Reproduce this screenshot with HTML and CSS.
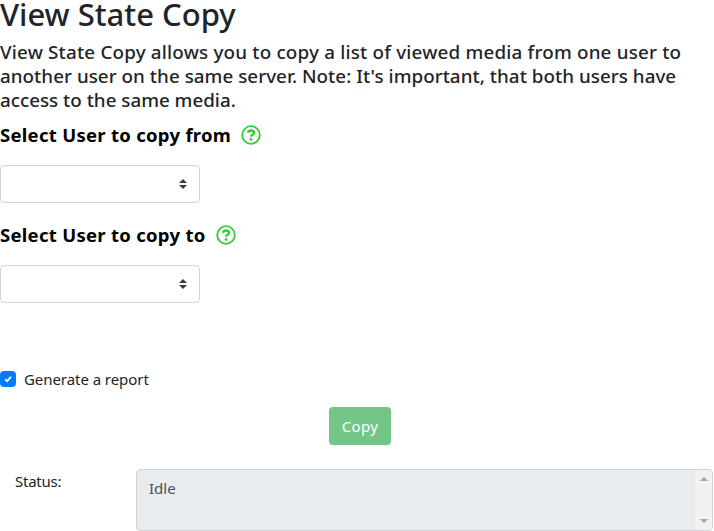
FILE: index.html
```html
<!DOCTYPE html>
<html lang="en">
<head>
<meta charset="utf-8">
<title>View State Copy</title>
<link rel="stylesheet" href="styles.css">
</head>
<body>
<main>
  <h1><span>View State Copy</span></h1>
  <p class="intro"><span class="l1">View State Copy allows you to copy a list of viewed media from one user to</span><br><span class="l2">another user on the same server. Note: It's important, that both users have</span><br><span class="l3">access to the same media.</span></p>
  <section class="field">
    <div class="label"><span>Select User to copy from</span>
      <svg class="help" viewBox="0 0 20 20"><circle cx="10" cy="10" r="8.8"/><path d="M7 7.8C7.4 6.1 8.4 5.5 10 5.5C11.8 5.5 13 6.5 13 7.9C13 9.9 10.1 9.8 10.1 11.8"/><circle class="dot" cx="10" cy="14.4" r="1.4"/></svg>
    </div>
    <div class="select"><svg class="arrows" viewBox="0 0 8 10"><path d="M0 4L4 0L8 4ZM0 6L4 10L8 6Z"/></svg></div>
  </section>
  <section class="field">
    <div class="label"><span>Select User to copy to</span>
      <svg class="help" viewBox="0 0 20 20"><circle cx="10" cy="10" r="8.8"/><path d="M7 7.8C7.4 6.1 8.4 5.5 10 5.5C11.8 5.5 13 6.5 13 7.9C13 9.9 10.1 9.8 10.1 11.8"/><circle class="dot" cx="10" cy="14.4" r="1.4"/></svg>
    </div>
    <div class="select"><svg class="arrows" viewBox="0 0 8 10"><path d="M0 4L4 0L8 4ZM0 6L4 10L8 6Z"/></svg></div>
  </section>
  <div class="check">
    <svg class="box" viewBox="0 0 16 16"><rect width="16" height="16" rx="4"/><path d="M5 8.2L7 10.1L11 5.8"/></svg>
    <span>Generate a report</span>
  </div>
  <div class="actions"><button type="button"><span>Copy</span></button></div>
  <div class="status">
    <div class="name"><span>Status:</span></div>
    <div class="output"><span class="value">Idle</span>
      <div class="scroll"><svg viewBox="0 0 8 4"><path d="M0 4L4 0L8 4Z"/></svg><svg viewBox="0 0 8 4"><path d="M0 0L4 4L8 0Z"/></svg></div>
    </div>
  </div>
</main>
</body>
</html>
```
FILE: styles.css
```css
* { box-sizing: border-box; }
body {
  margin: 0;
  height: 531px;
  overflow: hidden;
  background: #fff;
  color: #212529;
  font: 400 15px/24px "Noto Sans", "Open Sans", sans-serif;
}
main { width: 714px; }
svg { display: block; flex: none; }
h1 {
  margin: 0;
  padding-bottom: 8px;
  height: 40px;
  font-size: 31px;
  line-height: 28px;
  font-weight: 500;
  white-space: nowrap;
}
.intro {
  margin: 0;
  height: 83px;
  font-size: 18.8px;
  font-weight: 500;
  line-height: 24px;
  white-space: nowrap;
}
.l1 { letter-spacing: 0.2px; }
.l2 { letter-spacing: 0.04px; }
.field { height: 100px; }
.label {
  display: flex;
  align-items: center;
  gap: 10px;
  height: 24px;
  color: #000;
  font-size: 18.5px;
  font-weight: 700;
  white-space: nowrap;
}
.label span { letter-spacing: 0.28px; }
.help { width: 20px; height: 20px; margin-top: -1px; fill: none; stroke: #32cd32; stroke-width: 1.8; }
.help path { stroke-width: 2.4; }
.help .dot { fill: #32cd32; stroke: none; }
.select {
  display: flex;
  align-items: center;
  justify-content: flex-end;
  width: 200px;
  height: 38px;
  margin-top: 18px;
  padding-right: 12px;
  border: 1px solid #ced4da;
  border-radius: 4px;
}
.arrows { width: 8px; height: 10px; fill: #343a40; }
.check { display: flex; align-items: center; gap: 8px; height: 24px; margin-top: 44px; letter-spacing: -0.06px; }
.box { width: 16px; height: 16px; fill: #007bff; }
.box path { fill: none; stroke: #fff; stroke-width: 1.8; }
.actions { padding: 16px 0 0 329px; }
button {
  display: block;
  width: 62px;
  height: 38px;
  padding: 0;
  border: 0;
  border-radius: 4px;
  background: #74c687;
  color: #fff;
  font: 400 15px/24px "Noto Sans", "Open Sans", sans-serif;
  letter-spacing: 0.4px;
}
.status { display: flex; margin-top: 24px; }
.name { width: 136px; padding-left: 15px; letter-spacing: -0.25px; }
.output {
  display: flex;
  justify-content: space-between;
  width: 577px;
  height: 62px;
  border: 1px solid #ced4da;
  border-radius: 4px;
  background: #e9ecef;
  color: #495057;
  overflow: hidden;
}
.value { padding: 6px 0 0 12px; }
.scroll {
  display: flex;
  flex-direction: column;
  justify-content: space-between;
  align-items: center;
  width: 17px;
  padding: 7px 0;
  background: #f1f1f1;
}
.scroll svg { width: 8px; height: 4px; fill: #a3a3a3; }
```
